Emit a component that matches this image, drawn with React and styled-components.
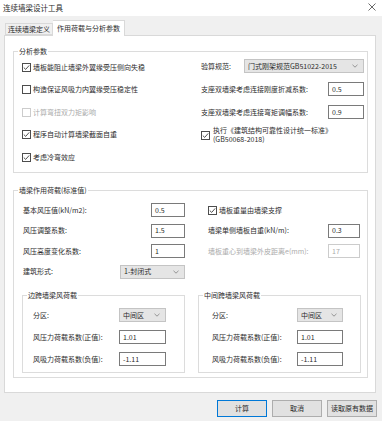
import React from 'react';
import styled, { createGlobalStyle } from 'styled-components';

const GlobalStyle = createGlobalStyle`
  html, body {
    margin: 0;
    padding: 0;
    background: #f0f0f0;
  }
  * {
    box-sizing: border-box;
  }
`;

const FONT = '"Noto Sans CJK SC", "Noto Sans", sans-serif';

const Window = styled.div`
  width: 382px;
  height: 421px;
  overflow: hidden;
  display: flex;
  flex-direction: column;
  background: #f0f0f0;
  font-family: ${FONT};
  font-size: 7px;
  line-height: 9px;
  color: #2b2b2b;
`;

const TitleBar = styled.div`
  height: 16px;
  flex-shrink: 0;
  background: #fff;
  display: flex;
  align-items: center;
  justify-content: space-between;
  padding: 0 6px 2px 3px;
  font-size: 7.5px;
`;

const TabStrip = styled.div`
  height: 19px;
  flex-shrink: 0;
  display: flex;
  align-items: flex-end;
  padding-left: 5px;
`;

const Tab = styled.div`
  position: relative;
  height: ${p => (p.$active ? '16px' : '12px')};
  padding: 0 ${p => (p.$active ? '4px' : '2px')};
  display: flex;
  align-items: center;
  justify-content: center;
  border: 1px solid #d9d9d9;
  border-bottom: ${p => (p.$active ? 'none' : '1px solid #d9d9d9')};
  border-left: ${p => (p.$active ? 'none' : '1px solid #d9d9d9')};
  background: ${p => (p.$active ? '#fff' : '#f0f0f0')};
  margin-bottom: ${p => (p.$active ? '-1px' : '0')};
  z-index: ${p => (p.$active ? 1 : 0)};
`;

const Panel = styled.div`
  height: 358px;
  flex-shrink: 0;
  margin: 0 6px 0 4px;
  background: #fff;
  border: 1px solid #d9d9d9;
  padding: 11px 7px 0 8px;
`;

const Group = styled.fieldset`
  margin: ${p => p.$top || 0}px 0 0 0;
  padding: 0;
  border: 1px solid #dcdcdc;
  min-width: 0;
`;

const Legend = styled.legend`
  margin-left: 4px;
  padding: 0 1px;
  line-height: 9px;
`;

const TwoCols = styled.div`
  display: grid;
  grid-template-columns: ${p => p.$cols};
  column-gap: ${p => p.$gap || 0}px;
  row-gap: 8.5px;
  padding: ${p => p.$pad};
`;

const Column = styled.div`
  display: flex;
  flex-direction: column;
  gap: ${p => p.$gap || 0}px;
  padding: ${p => p.$pad || '0'};
`;

const Row = styled.div`
  height: ${p => p.$h}px;
  display: flex;
  align-items: center;
  justify-content: space-between;
  color: ${p => (p.$disabled ? '#ababab' : 'inherit')};
`;

const CheckRow = styled.label`
  min-height: ${p => p.$h || 0}px;
  display: flex;
  align-items: center;
  gap: ${p => p.$gap || 2}px;
  color: ${p => (p.$disabled ? '#ababab' : 'inherit')};
`;

const Box = styled.span`
  width: 9px;
  height: 9px;
  flex-shrink: 0;
  display: flex;
  align-items: center;
  justify-content: center;
  background: #fff;
  border: 1px solid ${p => (p.$disabled ? '#cccccc' : '#4d4d4d')};
`;

const Field = styled.div`
  width: ${p => p.$w}px;
  height: 14px;
  flex-shrink: 0;
  display: flex;
  align-items: center;
  padding-left: 3px;
  background: #fff;
  border: 1px solid ${p => (p.$disabled ? '#cccccc' : '#7a7a7a')};
  color: ${p => (p.$disabled ? '#ababab' : 'inherit')};
`;

const Select = styled.div`
  width: ${p => p.$w}px;
  height: 14px;
  flex-shrink: 0;
  display: flex;
  align-items: center;
  justify-content: space-between;
  padding: 0 5px 0 3px;
  background: #e5e5e5;
  border: 1px solid #c4c4c4;
`;

const SubGrid = styled.div`
  display: grid;
  grid-template-columns: ${p => p.$labelW}px ${p => p.$ctrlW}px;
  grid-auto-rows: 22px;
  align-items: center;
  padding: 4.5px 0 2px ${p => p.$indent}px;
`;

const Footer = styled.div`
  display: flex;
  justify-content: flex-end;
  gap: 5px;
  padding: 7px 5px 0 0;
`;

const Button = styled.div`
  width: 50px;
  height: 17px;
  display: flex;
  align-items: center;
  justify-content: center;
  background: #e1e1e1;
  border: 1px solid ${p => (p.$primary ? '#0078d7' : '#adadad')};
`;

const Check = ({ checked, disabled }) => (
  <Box $disabled={disabled}>
    {checked && (
      <svg width="7" height="7" viewBox="0 0 7 7">
        <path d="M0.8 3.6 L2.7 5.4 L6.2 1.4" fill="none" stroke="#404040" strokeWidth="0.9" />
      </svg>
    )}
  </Box>
);

const Chevron = () => (
  <svg width="6" height="4" viewBox="0 0 6 4">
    <path d="M0.5 0.8 L3 3.2 L5.5 0.8" fill="none" stroke="#808080" strokeWidth="0.8" />
  </svg>
);

const Close = () => (
  <svg width="8" height="8" viewBox="0 0 8 8">
    <path d="M0.5 0.5 L7.5 7.5 M7.5 0.5 L0.5 7.5" stroke="#444" strokeWidth="0.8" />
  </svg>
);

const WindPanel = ({ title, indent, labelW, ctrlW }) => (
  <Group>
    <Legend>{title}</Legend>
    <SubGrid $indent={indent} $labelW={labelW} $ctrlW={ctrlW}>
      <span>分区:</span>
      <Select $w={ctrlW}>中间区<Chevron /></Select>
      <span>风压力荷载系数(正值):</span>
      <Field $w={ctrlW}>1.01</Field>
      <span>风吸力荷载系数(负值):</span>
      <Field $w={ctrlW}>-1.11</Field>
    </SubGrid>
  </Group>
);

export default function App() {
  return (
    <Window>
      <GlobalStyle />
      <TitleBar>
        <span>连续墙梁设计工具</span>
        <Close />
      </TitleBar>
      <TabStrip>
        <Tab>连续墙梁定义</Tab>
        <Tab $active>作用荷载与分析参数</Tab>
      </TabStrip>
      <Panel>
        <Group>
          <Legend>分析参数</Legend>
          <TwoCols $cols="179px 163px" $pad="0 3px 3px 8px">
            <Column>
              <CheckRow $h={22.5}><Check checked />墙板能阻止墙梁外翼缘受压侧向失稳</CheckRow>
              <CheckRow $h={22.5}><Check />构造保证风吸力内翼缘受压稳定性</CheckRow>
              <CheckRow $h={22.5} $disabled><Check disabled />计算弯扭双力矩影响</CheckRow>
              <CheckRow $h={22.5}><Check checked />程序自动计算墙梁截面自重</CheckRow>
              <CheckRow $h={22.5}><Check checked />考虑冷弯效应</CheckRow>
            </Column>
            <Column $gap={5} $pad="1px 0 0 0">
              <Row $h={18}>
                <span>验算规范:</span>
                <Select $w={120}>门式刚架规范GB51022-2015<Chevron /></Select>
              </Row>
              <Row $h={18}>
                <span>支座双墙梁考虑连接刚度折减系数:</span>
                <Field $w={36}>0.5</Field>
              </Row>
              <Row $h={18}>
                <span>支座双墙梁考虑连接弯矩调幅系数:</span>
                <Field $w={36}>0.9</Field>
              </Row>
              <CheckRow $gap={0}>
                <Check checked />
                <span style={{ paddingLeft: 1 }}>执行《建筑结构可靠性设计统一标准》<br />(GB50068-2018)</span>
              </CheckRow>
            </Column>
          </TwoCols>
        </Group>

        <Group $top={13}>
          <Legend>墙梁作用荷载(标准值)</Legend>
          <TwoCols $cols="163px 163px" $gap={13} $pad="5.5px 6px 4px 8px">
            <Column $pad="0 0 0 1px">
              <Row $h={20.5}><span>基本风压值(kN/m2):</span><Field $w={34}>0.5</Field></Row>
              <Row $h={20.5}><span>风压调整系数:</span><Field $w={34}>1.5</Field></Row>
              <Row $h={20.5}><span>风压高度变化系数:</span><Field $w={34}>1</Field></Row>
              <Row $h={20.5}><span>建筑形式:</span><Select $w={65}>1-封闭式<Chevron /></Select></Row>
            </Column>
            <Column $pad="0 1px 0 10px">
              <CheckRow $h={20.5}><Check checked />墙板重量由墙梁支撑</CheckRow>
              <Row $h={20.5}><span>墙梁单侧墙板自重(kN/m):</span><Field $w={32}>0.3</Field></Row>
              <Row $h={20.5} $disabled><span>墙板重心到墙梁外皮距离e(mm):</span><Field $w={32} $disabled>17</Field></Row>
            </Column>
            <WindPanel title="边跨墙梁风荷载" indent={10} labelW={86} ctrlW={47} />
            <WindPanel title="中间跨墙梁风荷载" indent={13} labelW={85} ctrlW={46} />
          </TwoCols>
        </Group>
      </Panel>
      <Footer>
        <Button $primary>计算</Button>
        <Button>取消</Button>
        <Button>读取原有数据</Button>
      </Footer>
    </Window>
  );
}
